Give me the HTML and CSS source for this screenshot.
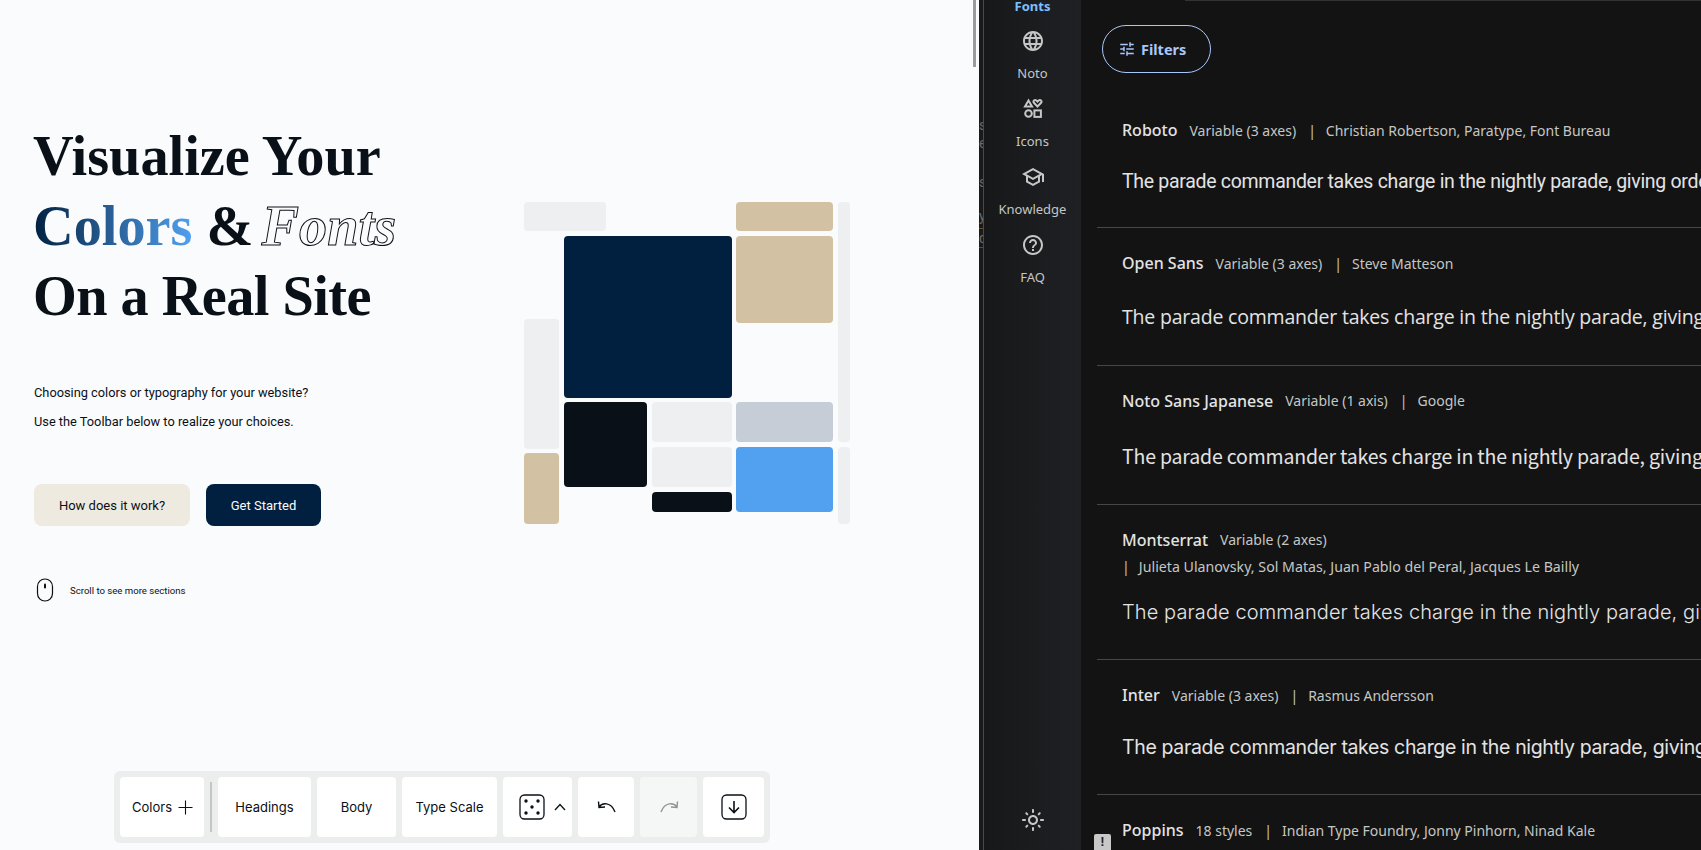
FILE: index.html

```html
<!DOCTYPE html>
<html lang="en">
<head>
    <meta charset="UTF-8" />
    <title>Visualize Your Colors &amp; Fonts</title>
    <link rel="stylesheet" href="styles.css">
</head>
<body>
    <div class="app">
        <!-- Left: the site preview -->
        <section class="preview">
            <div class="scroll-thumb"></div>
            <div class="hero">
                <div class="hero-text">
                    <h1>Visualize Your<br><span class="grad">Colors</span> &amp; <em class="outline">Fonts</em><br><span class="tight">On a Real Site</span></h1>
                    <p class="lead">Choosing colors or typography for your website?</p>
                    <p class="lead">Use the Toolbar below to realize your choices.</p>
                    <div class="cta">
                        <button class="btn btn-light">How does it work?</button>
                        <button class="btn btn-dark">Get Started</button>
                    </div>
                    <div class="scroll-hint">
                        <svg width="18" height="24" viewBox="0 0 18 24" fill="none">
                            <rect x="1.5" y="1" width="15" height="22" rx="7.5" stroke="#0a1017" stroke-width="1.2"/>
                            <rect x="8" y="5.5" width="2" height="5" rx="1" fill="#0a1017"/>
                        </svg>
                        <span>Scroll to see more sections</span>
                    </div>
                </div>
                <div class="mosaic">
                    <div class="tile grey m-a"></div>
                    <div class="tile navy m-navy"></div>
                    <div class="tile tan m-tan1"></div>
                    <div class="tile tan m-tan2"></div>
                    <div class="tile grey m-strip1"></div>
                    <div class="tile grey m-left"></div>
                    <div class="tile tan m-tan3"></div>
                    <div class="tile ink m-ink"></div>
                    <div class="tile grey m-g2"></div>
                    <div class="tile grey m-g3"></div>
                    <div class="tile ink m-ink2"></div>
                    <div class="tile slate m-slate"></div>
                    <div class="tile blue m-blue"></div>
                    <div class="tile grey m-strip2"></div>
                </div>
            </div>

            <div class="toolbar">
                <button class="tool tool-colors">Colors
                    <svg width="15" height="15" viewBox="0 0 15 15"><path d="M7.500 0.500v14M0.500 7.500h14" stroke="#0a1017" stroke-width="1.1"/></svg>
                </button>
                <div class="tool-sep"></div>
                <button class="tool tool-headings">Headings</button>
                <button class="tool tool-body">Body</button>
                <button class="tool tool-scale">Type Scale</button>
                <button class="tool tool-dice">
                    <svg width="26" height="26" viewBox="0 0 26 26" fill="none">
                        <rect x="1" y="1" width="24" height="24" rx="4.5" stroke="#0a1017" stroke-width="1.3"/>
                        <circle cx="7" cy="7" r="1.7" fill="#0a1017"/><circle cx="19" cy="7" r="1.7" fill="#0a1017"/>
                        <circle cx="13" cy="13" r="1.7" fill="#0a1017"/>
                        <circle cx="7" cy="19" r="1.7" fill="#0a1017"/><circle cx="19" cy="19" r="1.7" fill="#0a1017"/>
                    </svg>
                    <svg width="12" height="8" viewBox="0 0 12 8" fill="none"><path d="M1 7l5-5.500L11 7" stroke="#0a1017" stroke-width="1.3"/></svg>
                </button>
                <button class="tool tool-undo">
                    <svg width="20" height="14" viewBox="0 0 20 14" fill="none"><path d="M2 7c3-4.500 12-5.500 16 5M1.500 1.500L2 7.500l6-.5" stroke="#0a1017" stroke-width="1.4"/></svg>
                </button>
                <button class="tool tool-redo" disabled>
                    <svg width="20" height="14" viewBox="0 0 20 14" fill="none"><path d="M18 7c-3-4.500-12-5.500-16 5M18.500 1.500L18 7.500l-6-.5" stroke="#8f9496" stroke-width="1.4"/></svg>
                </button>
                <button class="tool tool-save">
                    <svg width="26" height="26" viewBox="0 0 26 26" fill="none">
                        <rect x="1" y="1" width="24" height="24" rx="4.5" stroke="#0a1017" stroke-width="1.3"/>
                        <path d="M13 7v11M8 13.500l5 5 5-5" stroke="#0a1017" stroke-width="1.6"/>
                    </svg>
                </button>
            </div>
        </section>

        <!-- Sliver of the page behind the panel -->
        <div class="sliver">
            <span class="sl-a">s</span><span class="sl-b">e</span><span class="sl-c">s</span><span class="sl-d">y</span><span class="sl-e">d</span>
            <div class="sl-lines"></div>
        </div>

        <!-- Right: the fonts panel -->
        <nav class="rail">
            <div class="rail-top">
                <div class="rail-active">Fonts</div>
                <div class="rail-item">
                    <svg width="24" height="24" viewBox="0 0 24 24"><path d="M11.990 2C6.470 2 2 6.480 2 12s4.470 10 9.990 10C17.520 22 22 17.520 22 12S17.520 2 11.990 2zm6.930 6h-2.950c-.320-1.250-.780-2.450-1.380-3.560 1.840.630 3.370 1.910 4.330 3.560zM12 4.040c.830 1.200 1.480 2.530 1.910 3.960h-3.820c.430-1.430 1.080-2.760 1.910-3.960zM4.260 14C4.100 13.360 4 12.690 4 12s.100-1.360.260-2h3.380c-.080.660-.140 1.320-.140 2 0 .680.060 1.340.140 2H4.260zm.820 2h2.950c.320 1.250.780 2.450 1.380 3.560-1.840-.630-3.370-1.900-4.330-3.560zm2.950-8H5.080c.960-1.660 2.490-2.930 4.330-3.560C8.810 5.550 8.350 6.750 8.030 8zM12 19.960c-.830-1.200-1.480-2.530-1.910-3.960h3.820c-.430 1.430-1.080 2.760-1.910 3.960zM14.340 14H9.660c-.090-.660-.160-1.320-.160-2 0-.680.070-1.350.160-2h4.680c.090.650.160 1.320.160 2 0 .680-.070 1.340-.160 2zm.250 5.560c.600-1.110 1.060-2.310 1.380-3.560h2.950c-.960 1.650-2.490 2.930-4.330 3.560zM16.360 14c.080-.660.140-1.320.140-2 0-.680-.060-1.340-.140-2h3.380c.160.640.260 1.310.260 2s-.100 1.360-.260 2h-3.380z"/></svg>
                    <span>Noto</span>
                </div>
                <div class="rail-item">
                    <svg class="stroked" width="24" height="24" viewBox="0 0 24 24" fill="none">
                        <path d="M7.500 3.500l3.500 6H4z"/>
                        <path d="M16.500 9.500l-3.600-3.700c-1.500-1.700.900-3.800 2.500-2.200l1.100 1 1.100-1c1.600-1.600 4 .5 2.500 2.200z"/>
                        <circle cx="7.500" cy="16.500" r="3.300"/>
                        <rect x="13.400" y="13.400" width="6.500" height="6.500"/>
                    </svg>
                    <span>Icons</span>
                </div>
                <div class="rail-item">
                    <svg width="24" height="24" viewBox="0 0 24 24"><path d="M12 3L1 9l4 2.180v6L12 21l7-3.820v-6l2-1.090V17h2V9L12 3zm6.820 6L12 12.720 5.180 9 12 5.280 18.820 9zM17 15.990l-5 2.730-5-2.730v-3.720L12 15l5-2.730v3.720z"/></svg>
                    <span>Knowledge</span>
                </div>
                <div class="rail-item">
                    <svg width="24" height="24" viewBox="0 0 24 24"><path d="M11 18h2v-2h-2v2zm1-16C6.480 2 2 6.480 2 12s4.480 10 10 10 10-4.480 10-10S17.520 2 12 2zm0 18c-4.410 0-8-3.590-8-8s3.590-8 8-8 8 3.590 8 8-3.590 8-8 8zm0-14c-2.210 0-4 1.790-4 4h2c0-1.100.900-2 2-2s2 .900 2 2c0 2-3 1.750-3 5h2c0-2.250 3-2.500 3-5 0-2.210-1.790-4-4-4z"/></svg>
                    <span>FAQ</span>
                </div>
            </div>
            <svg class="rail-sun" width="24" height="24" viewBox="0 0 24 24"><path d="M12 9c1.650 0 3 1.350 3 3s-1.350 3-3 3-3-1.350-3-3 1.350-3 3-3m0-2c-2.760 0-5 2.240-5 5s2.240 5 5 5 5-2.240 5-5-2.240-5-5-5zM2 13h2c.550 0 1-.450 1-1s-.450-1-1-1H2c-.550 0-1 .450-1 1s.450 1 1 1zm18 0h2c.550 0 1-.450 1-1s-.450-1-1-1h-2c-.550 0-1 .450-1 1s.450 1 1 1zM11 2v2c0 .550.450 1 1 1s1-.450 1-1V2c0-.550-.450-1-1-1s-1 .450-1 1zm0 18v2c0 .550.450 1 1 1s1-.450 1-1v-2c0-.550-.450-1-1-1s-1 .450-1 1zM5.990 4.580c-.390-.390-1.030-.390-1.410 0-.390.390-.390 1.030 0 1.410l1.060 1.060c.390.390 1.030.390 1.410 0s.390-1.030 0-1.410L5.990 4.580zm12.370 12.370c-.390-.390-1.030-.390-1.410 0-.390.390-.390 1.030 0 1.410l1.060 1.060c.390.390 1.030.390 1.410 0 .390-.390.390-1.030 0-1.410l-1.060-1.060zm1.060-10.960c.390-.390.390-1.030 0-1.410-.390-.390-1.030-.390-1.410 0l-1.060 1.060c-.390.390-.390 1.030 0 1.410s1.030.390 1.410 0l1.060-1.060zM7.050 18.360c.390-.390.390-1.030 0-1.410-.390-.390-1.030-.390-1.410 0l-1.060 1.060c-.390.390-.390 1.030 0 1.410s1.030.390 1.410 0l1.060-1.060z"/></svg>
        </nav>

        <main class="fonts">
            <button class="filters">
                <svg width="18" height="18" viewBox="0 0 24 24"><path d="M3 17v2h6v-2H3zM3 5v2h10V5H3zm10 16v-2h8v-2h-8v-2h-2v6h2zM7 9v2H3v2h4v2h2V9H7zm14 4v-2H11v2h10zm-6-4h2V7h4V5h-4V3h-2v6z"/></svg>
                Filters
            </button>
            <div class="font-list">
                <article class="font-item">
                    <div class="font-head"><span class="font-name">Roboto</span><span class="font-meta">Variable (3 axes)</span><span class="font-bar">|</span><span class="font-meta">Christian Robertson, Paratype, Font Bureau</span></div>
                    <div class="sample s-roboto">The parade commander takes charge in the nightly parade, giving orders to the troops.</div>
                </article>
                <article class="font-item">
                    <div class="font-head"><span class="font-name">Open Sans</span><span class="font-meta">Variable (3 axes)</span><span class="font-bar">|</span><span class="font-meta">Steve Matteson</span></div>
                    <div class="sample s-open">The parade commander takes charge in the nightly parade, giving orders to the troops.</div>
                </article>
                <article class="font-item">
                    <div class="font-head"><span class="font-name">Noto Sans Japanese</span><span class="font-meta">Variable (1 axis)</span><span class="font-bar">|</span><span class="font-meta">Google</span></div>
                    <div class="sample s-noto">The parade commander takes charge in the nightly parade, giving orders to the troops.</div>
                </article>
                <article class="font-item">
                    <div class="font-head"><span class="font-name">Montserrat</span><span class="font-meta">Variable (2 axes)</span></div>
                    <div class="font-head font-head-wrap"><span class="font-bar">|</span><span class="font-meta">Julieta Ulanovsky, Sol Matas, Juan Pablo del Peral, Jacques Le Bailly</span></div>
                    <div class="sample s-mont">The parade commander takes charge in the nightly parade, giving orders to the troops.</div>
                </article>
                <article class="font-item">
                    <div class="font-head"><span class="font-name">Inter</span><span class="font-meta">Variable (3 axes)</span><span class="font-bar">|</span><span class="font-meta">Rasmus Andersson</span></div>
                    <div class="sample s-inter">The parade commander takes charge in the nightly parade, giving orders to the troops.</div>
                </article>
                <article class="font-item">
                    <div class="font-head"><span class="font-name">Poppins</span><span class="font-meta">18 styles</span><span class="font-bar">|</span><span class="font-meta">Indian Type Foundry, Jonny Pinhorn, Ninad Kale</span></div>
                </article>
            </div>
            <div class="issue-badge">!</div>
        </main>
    </div>
</body>
</html>
```

FILE: styles.css

```css
:root {
    --page: #fafbfd;
    --ink: #0a1017;
    --navy: #012040;
    --tan: #d2c2a3;
    --mist: #eeeff1;
    --slate: #c6cdd6;
    --blue: #52a1f0;
    --panel: #131313;
    --panel-text: #e3e3e3;
    --panel-muted: #c4c7c5;
    --panel-line: #444746;
    --panel-accent: #a8c7fa;
}
* {
    box-sizing: border-box;
}
html, body {
    margin: 0;
    height: 100%;
    overflow: hidden;
}
body {
    background: var(--page);
    color: var(--ink);
    font-family: Roboto, sans-serif;
}
button {
    font: inherit;
    border: none;
    cursor: pointer;
}
.app {
    display: flex;
    height: 850px;
}

/* Preview */
.preview {
    position: relative;
    flex: 0 0 979px;
    display: flex;
    flex-direction: column;
    background: var(--page);
}
.scroll-thumb {
    position: absolute;
    top: 0;
    right: 3px;
    width: 3px;
    height: 67px;
    background: #9b9b9b;
}
.hero {
    display: flex;
    padding: 121px 0 0 34px;
    flex: 1;
}
.hero-text {
    width: 490px;
}
h1 {
    margin: 0 0 53px -1px;
    font-family: "Liberation Serif", serif;
    font-size: 56.3px;
    font-weight: 700;
    line-height: 70px;
    white-space: nowrap;
}
.grad {
    background: linear-gradient(90deg, #012040, #52a1f0);
    -webkit-background-clip: text;
    background-clip: text;
    color: transparent;
}
.outline {
    margin-left: -6px;
    color: var(--page);
    -webkit-text-stroke: 1px #0a1017;
    font-weight: 700;
}
.tight {
    letter-spacing: -0.55px;
}
.lead {
    margin: 0 0 12px 0;
    font-size: 12.8px;
    line-height: 17px;
}
.cta {
    display: flex;
    gap: 16px;
    margin-top: 54px;
}
.btn {
    height: 42px;
    border-radius: 8px;
    font-size: 13px;
}
.btn-light {
    width: 156px;
    background: #eeeae0;
    color: var(--ink);
}
.btn-dark {
    width: 115px;
    background: var(--navy);
    color: #fafbfd;
}
.scroll-hint {
    display: flex;
    align-items: center;
    gap: 16px;
    margin: 52px 0 0 2px;
    font-size: 9.6px;
}
.mosaic {
    display: grid;
    grid-template-columns: 35px 5px 42px 41px 5px 80px 4px 97px 5px 12px;
    grid-template-rows: 29px 5px 83px 4px 75px 4px 40px 5px 2px 4px 34px 5px 20px 12px;
    margin: 81px 0 0 0;
    height: 322px;
}
.tile {
    border-radius: 4px;
}
.grey { background: var(--mist); }
.navy { background: var(--navy); }
.tan { background: var(--tan); }
.ink { background: var(--ink); }
.slate { background: var(--slate); }
.blue { background: var(--blue); }
.m-a { grid-area: 1 / 1 / 2 / 4; }
.m-navy { grid-area: 3 / 3 / 6 / 7; }
.m-tan1 { grid-area: 1 / 8 / 2 / 9; }
.m-tan2 { grid-area: 3 / 8 / 5 / 9; }
.m-strip1 { grid-area: 1 / 10 / 8 / 11; }
.m-left { grid-area: 4 / 1 / 10 / 2; }
.m-tan3 { grid-area: 11 / 1 / 15 / 2; }
.m-ink { grid-area: 7 / 3 / 12 / 5; }
.m-g2 { grid-area: 7 / 6 / 8 / 7; }
.m-g3 { grid-area: 9 / 6 / 12 / 7; }
.m-ink2 { grid-area: 13 / 6 / 14 / 7; }
.m-slate { grid-area: 7 / 8 / 8 / 9; }
.m-blue { grid-area: 9 / 8 / 14 / 9; }
.m-strip2 { grid-area: 9 / 10 / 15 / 11; }

/* Toolbar */
.toolbar {
    display: flex;
    align-items: center;
    gap: 6px;
    width: 656px;
    height: 72px;
    margin: 0 0 7px 114px;
    padding: 6px;
    background: #eceeee;
    border-radius: 6px;
}
.tool {
    display: flex;
    align-items: center;
    justify-content: center;
    height: 60px;
    padding: 0;
    background: #fff;
    border-radius: 4px;
    color: var(--ink);
    font-family: Inter, sans-serif;
    font-size: 13px;
}
.tool-colors { width: 84px; gap: 6px; padding-left: 1px; }
.tool-headings { width: 93px; }
.tool-body { width: 79px; }
.tool-scale { width: 95px; }
.tool-dice { width: 69px; gap: 9px; padding-left: 9px; }
.tool-undo { width: 56px; padding-left: 1px; }
.tool-redo { width: 57px; background: #f5f6f6; }
.tool-save { width: 61px; }
.tool-sep {
    width: 2px;
    height: 50px;
    background: #c4c6c6;
}

/* Sliver between the two panes */
.sliver {
    position: relative;
    flex: 0 0 5px;
    background: #1a1a1b;
    border-right: 1px solid #4a4a4a;
    overflow: hidden;
    color: #6d6a6a;
    font-family: Roboto, sans-serif;
    font-size: 14px;
}
.sliver span {
    position: absolute;
    left: 0;
}
.sl-a { top: 117px; }
.sl-b { top: 135px; }
.sl-c { top: 174px; }
.sl-d { top: 208px; }
.sl-e { top: 230px; }
.sl-lines {
    position: absolute;
    top: 228px;
    left: 0;
    width: 100%;
    height: 20px;
    border-top: 1px solid #6b4a33;
    border-bottom: 1px solid #6b4a33;
}

/* Rail */
.rail {
    flex: 0 0 97px;
    display: flex;
    flex-direction: column;
    justify-content: space-between;
    background: linear-gradient(90deg, #17181a, #1e2023);
    color: var(--panel-muted);
    font-family: "Noto Sans", sans-serif;
    font-size: 13px;
    text-align: center;
}
.rail-active {
    margin-top: -4px;
    height: 24px;
    line-height: 20px;
    color: #7cc0ff;
    font-weight: 700;
}
.rail-item {
    display: flex;
    flex-direction: column;
    align-items: center;
    height: 68px;
    padding-top: 9px;
}
.rail-item svg, .rail-sun {
    fill: var(--panel-muted);
}
.rail-item svg.stroked {
    fill: none;
    stroke: var(--panel-muted);
    stroke-width: 2;
}
.rail-item span {
    margin-top: 10px;
    line-height: 20px;
}
.rail-sun {
    align-self: center;
    margin-bottom: 18px;
}

/* Fonts panel */
.fonts {
    position: relative;
    flex: 1;
    min-width: 0;
    background: var(--panel);
    overflow: hidden;
    white-space: nowrap;
}
.fonts::before {
    content: "";
    position: absolute;
    top: 0;
    left: 104px;
    right: 0;
    height: 1px;
    background: #333;
}
.filters {
    display: flex;
    align-items: center;
    gap: 5px;
    width: 109px;
    height: 48px;
    margin: 25px 0 0 21px;
    padding: 0 0 1px 15px;
    background: transparent;
    border: 1px solid var(--panel-accent);
    border-radius: 24px;
    color: var(--panel-accent);
    font-family: "Noto Sans", sans-serif;
    font-size: 14.5px;
    font-weight: 700;
}
.filters svg {
    fill: var(--panel-accent);
}
.font-list {
    margin: 22px 0 0 16px;
}
.font-item {
    padding: 23px 0 34px 25px;
    border-bottom: 1px solid var(--panel-line);
}
.font-head {
    display: flex;
    align-items: center;
    height: 24px;
    color: var(--panel-muted);
    font-family: "Noto Sans", sans-serif;
    font-size: 14px;
}
.font-head-wrap {
    margin-top: 3px;
    font-size: 14.2px;
}
.font-name {
    margin-right: 12px;
    color: var(--panel-text);
    font-size: 16px;
    font-weight: 500;
}
.font-bar {
    margin: 0 10px 0 12px;
}
.font-head-wrap .font-bar {
    margin: 0 9px 0 0;
}
.sample {
    margin-top: 28px;
    color: var(--panel-text);
    font-size: 19.5px;
}
.s-roboto { font-family: Roboto, sans-serif; line-height: 23.4px; letter-spacing: -0.3px; }
.s-open { font-family: "Open Sans", sans-serif; line-height: 27.2px; letter-spacing: -0.2px; }
.s-noto { font-family: "Noto Sans CJK JP", sans-serif; line-height: 29px; letter-spacing: -0.18px; }
.s-mont {
    margin-top: 21px;
    font-family: Inter, sans-serif;
    font-size: 20px;
    font-weight: 300;
    letter-spacing: 0.1px;
    line-height: 25.4px;
}
.s-inter { font-family: Inter, sans-serif; line-height: 25px; letter-spacing: -0.35px; }
.issue-badge {
    position: absolute;
    left: 13px;
    bottom: 0;
    width: 17px;
    height: 16px;
    background: #c8c8c8;
    border-radius: 2px 2px 0 0;
    color: #222;
    font-family: "Liberation Sans", sans-serif;
    font-size: 13px;
    font-weight: 700;
    line-height: 16px;
    text-align: center;
}
```
